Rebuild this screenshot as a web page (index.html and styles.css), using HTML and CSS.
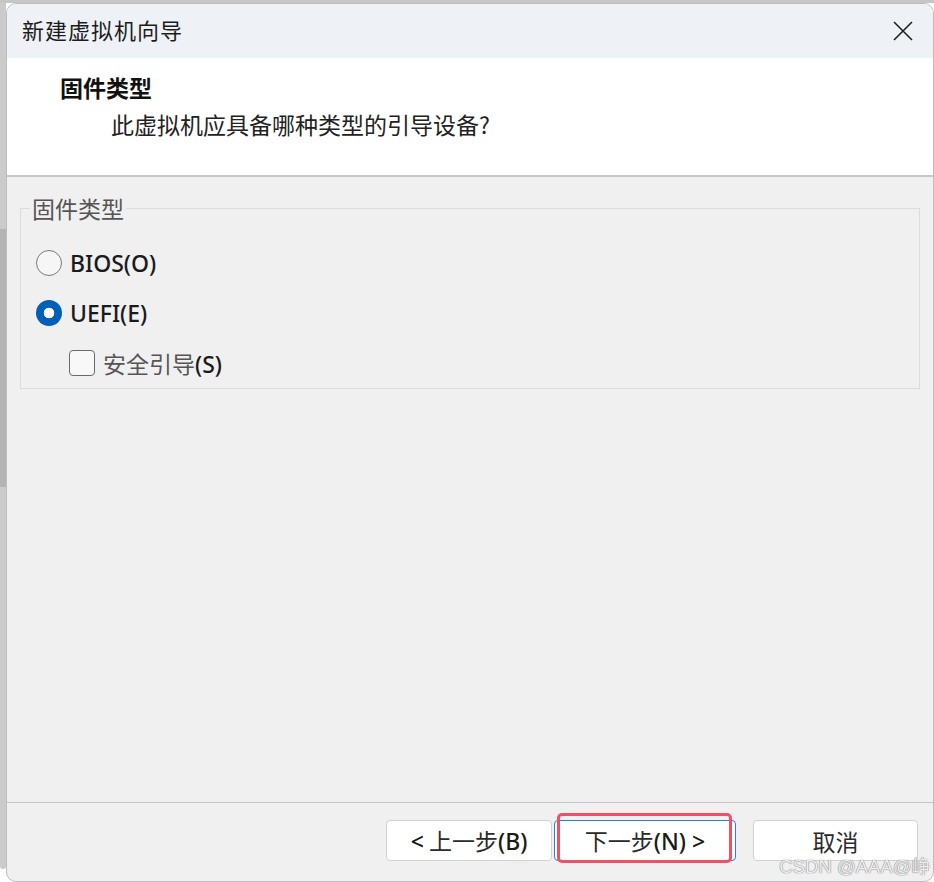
FILE: index.html
```html
<!DOCTYPE html>
<html lang="zh-CN">
<head>
<meta charset="utf-8">
<title>新建虚拟机向导</title>
<link rel="stylesheet" href="styles.css">
</head>
<body>
<div class="desk">
  <div class="side-scroll"><div class="side-thumb"></div></div>
  <div class="window">
    <div class="titlebar">
      <span class="title">新建虚拟机向导</span>
      <svg class="close" width="22" height="22" viewBox="0 0 22 22" aria-hidden="true">
        <path d="M2 2 L20 20 M20 2 L2 20" stroke="#1f1f1f" stroke-width="1.6" fill="none"/>
      </svg>
    </div>
    <div class="header">
      <div class="h-title">固件类型</div>
      <div class="h-sub">此虚拟机应具备哪种类型的引导设备?</div>
    </div>
    <div class="main">
      <fieldset class="group">
        <legend class="group-label">固件类型</legend>
        <div class="options">
          <div class="opt">
            <span class="radio"></span>
            <span class="opt-text">BIOS(O)</span>
          </div>
          <div class="opt">
            <span class="radio on"></span>
            <span class="opt-text">UEFI(E)</span>
          </div>
          <div class="opt sub">
            <span class="check"></span>
            <span class="opt-text cjk">安全引导<span class="key">(S)</span></span>
          </div>
        </div>
      </fieldset>
    </div>
    <div class="footer">
      <button class="btn btn-back"><span class="key">&lt;</span> 上一步<span class="key">(B)</span></button>
      <div class="btn-wrap">
        <button class="btn btn-next">下一步<span class="key">(N) &gt;</span></button>
        <span class="mark"></span>
      </div>
      <button class="btn btn-cancel">取消</button>
      <span class="watermark">CSDN @AAA@峥</span>
    </div>
  </div>
</div>
</body>
</html>
```
FILE: styles.css
```css
html, body {
  margin: 0;
  padding: 0;
  background: #ffffff;
}

body {
  width: 934px;
  height: 882px;
  overflow: hidden;
  font-family: "Noto Sans", "Noto Sans CJK SC", sans-serif;
  color: #1b1b1b;
}

.desk {
  display: flex;
  height: 882px;
  border-top: 3px solid #c6c6c6;
  box-sizing: border-box;
}

/* scrollbar of the window behind */
.side-scroll {
  width: 6px;
  flex: none;
  background: #cbcbcb;
  height: 866px;
  border-radius: 0 0 4px 4px;
  position: relative;
}

.side-thumb {
  position: absolute;
  left: 0;
  top: 226px;
  width: 6px;
  height: 258px;
  background: #b4b4b4;
}

.window {
  flex: 1;
  display: flex;
  flex-direction: column;
  height: 879px;
  border: 1px solid #bdbdbd;
  border-radius: 10px;
  overflow: hidden;
  box-sizing: border-box;
  background: #f0f0f0;
  position: relative;
}

.titlebar {
  height: 54px;
  flex: none;
  display: flex;
  align-items: center;
  justify-content: space-between;
  padding: 0 19px 0 15px;
  background: #eef2f7;
}

.title {
  font-family: "Noto Sans CJK SC", sans-serif;
  font-size: 22px;
  line-height: 28px;
  margin-top: -4px;
  color: #1c1c1c;
  letter-spacing: 1px;
}

.close {
  display: block;
}

.header {
  height: 119px;
  flex: none;
  box-sizing: border-box;
  background: #ffffff;
  border-bottom: 2px solid #c6c6c6;
  padding: 14px 0 0 53px;
  font-family: "Noto Sans CJK SC", sans-serif;
}

.h-title {
  font-size: 23px;
  line-height: 30px;
  font-weight: 700;
  color: #111;
}

.h-sub {
  margin-top: 7px;
  padding-left: 51px;
  font-size: 23px;
  line-height: 30px;
  color: #222;
}

.main {
  flex: 1;
  padding: 17px 13px 0 13px;
}

.group {
  margin: 0;
  padding: 0 0 12px 9px;
  border: 1px solid #dcdcdc;
}

.group-label {
  padding: 0 2px;
  font-family: "Noto Sans CJK SC", sans-serif;
  font-size: 23px;
  line-height: 28px;
  color: #555;
}

.options {
  display: flex;
  flex-direction: column;
  gap: 24px;
  padding: 28px 0 0 6px;
}

.opt {
  display: flex;
  align-items: center;
  gap: 8px;
  height: 26px;
}

.opt.sub {
  padding-left: 33px;
}

.radio {
  width: 26px;
  height: 26px;
  box-sizing: border-box;
  border-radius: 50%;
  border: 1.5px solid #7a7a7a;
  background: #f6f6f6;
  flex: none;
}

.radio.on {
  border: none;
  background: radial-gradient(circle, #ffffff 0 5px, #005fb8 5.6px);
}

.check {
  width: 26px;
  height: 26px;
  box-sizing: border-box;
  border-radius: 4px;
  border: 1.5px solid #6a6a6a;
  background: #f8f8f8;
  flex: none;
}

.opt-text {
  font-family: "Noto Sans", "Noto Sans CJK SC", sans-serif;
  font-size: 23px;
  font-weight: 500;
  color: #1a1a1a;
  line-height: 26px;
}

.opt-text.cjk {
  font-family: "Noto Sans CJK SC", sans-serif;
  font-weight: 400;
  color: #555;
}

.key {
  font-family: "Noto Sans", sans-serif;
  font-weight: 500;
  color: #1a1a1a;
}

.footer {
  height: 79px;
  flex: none;
  box-sizing: border-box;
  border-top: 1px solid #c6c6c6;
  display: flex;
  justify-content: flex-end;
  align-items: flex-start;
  padding: 17px 15px 0 0;
  position: relative;
}

.btn {
  height: 41px;
  box-sizing: border-box;
  background: #ffffff;
  border: 1px solid #d2d2d2;
  border-radius: 4px;
  font-family: "Noto Sans CJK SC", sans-serif;
  font-size: 23px;
  font-weight: 400;
  color: #2a2a2a;
  padding: 0;
  line-height: 38px;
}

.btn-back {
  width: 166px;
  margin-right: 2px;
}

.btn-wrap {
  position: relative;
  margin-right: 17px;
}

.btn-next {
  width: 182px;
  border: 1.5px solid #2a7fd6;
  display: block;
}

.btn-cancel {
  width: 165px;
}

/* red highlight drawn over the next button */
.mark {
  position: absolute;
  left: 3px;
  top: -7px;
  width: 175px;
  height: 50px;
  box-sizing: border-box;
  border: 3px solid #f04f66;
  border-radius: 5px;
  pointer-events: none;
}

.watermark {
  position: absolute;
  right: 3px;
  bottom: 3px;
  font-family: "Liberation Sans", "Noto Sans CJK SC", sans-serif;
  font-size: 18.5px;
  color: rgba(255, 255, 255, 0.9);
  text-shadow: 0 0 1px #7a7a7a, 0 0 1px #7a7a7a;
}
```
